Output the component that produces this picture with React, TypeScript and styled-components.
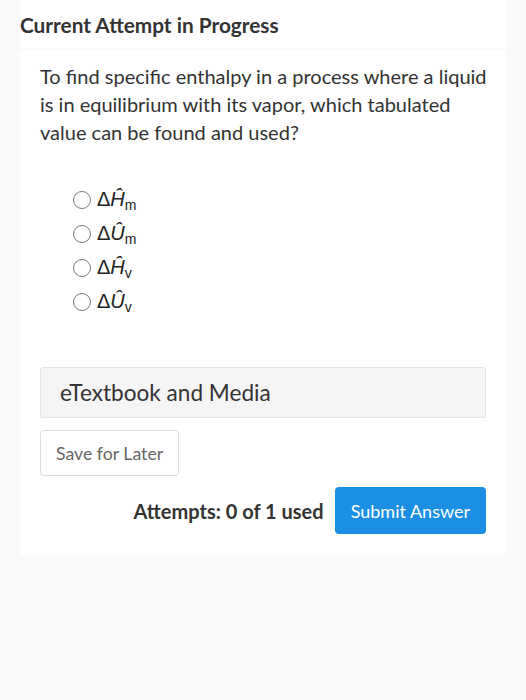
import { createGlobalStyle, styled } from "styled-components";

const GlobalStyle = createGlobalStyle`
  html, body {
    margin: 0;
    padding: 0;
    background: #fafafa;
  }
  body {
    font-family: Lato, "Open Sans", sans-serif;
    color: #333;
  }
`;

type Option = { symbol: string; sub: string };

const options: Option[] = [
  { symbol: "Ĥ", sub: "m" },
  { symbol: "Û", sub: "m" },
  { symbol: "Ĥ", sub: "v" },
  { symbol: "Û", sub: "v" },
];

const App: React.FunctionComponent = () => {
  return (
    <Page>
      <GlobalStyle />
      <HeaderCard>Current Attempt in Progress</HeaderCard>
      <BodyCard>
        <Question>
          To find specific enthalpy in a process where a liquid is in
          equilibrium with its vapor, which tabulated value can be found and
          used?
        </Question>
        <OptionList>
          {options.map((o, i) => (
            <OptionRow key={i}>
              <Radio type="radio" name="answer" />
              <MathText>
                Δ<i>{o.symbol}</i>
                <Sub>{o.sub}</Sub>
              </MathText>
            </OptionRow>
          ))}
        </OptionList>
        <MediaPanel>eTextbook and Media</MediaPanel>
        <SaveButton>Save for Later</SaveButton>
        <SubmitRow>
          <Attempts>Attempts: 0 of 1 used</Attempts>
          <SubmitButton>Submit Answer</SubmitButton>
        </SubmitRow>
      </BodyCard>
    </Page>
  );
};
export default App;

const Page = styled.main`
  display: flex;
  flex-direction: column;
  gap: 2px;
  padding: 0 20px;
`;
const HeaderCard = styled.header`
  display: flex;
  align-items: center;
  height: 48px;
  background: #fff;
  font-size: 20.8px;
  font-weight: 700;
  color: #333;
`;
const BodyCard = styled.section`
  display: flex;
  flex-direction: column;
  background: #fff;
  padding: 12px 20px 21px;
`;
const Question = styled.p`
  margin: 0 -6px 0 0;
  font-size: 20px;
  line-height: 28px;
  color: #333;
`;
const OptionList = styled.div`
  display: flex;
  flex-direction: column;
  gap: 10px;
  margin: 42px 0 0 33px;
`;
const OptionRow = styled.label`
  display: flex;
  align-items: center;
  gap: 6px;
  height: 24px;
`;
const Radio = styled.input`
  appearance: none;
  width: 18px;
  height: 18px;
  margin: 0;
  border: 1.5px solid #7a7a7a;
  border-radius: 50%;
  background: #fff;
`;
const MathText = styled.span`
  font-family: "Liberation Sans", Arial, sans-serif;
  font-size: 20px;
  color: #222;
`;
const Sub = styled.sub`
  font-size: 14px;
  vertical-align: -4px;
`;
const MediaPanel = styled.div`
  display: flex;
  align-items: center;
  height: 49px;
  margin-top: 53px;
  padding: 0 19px;
  background: #f5f5f5;
  border: 1px solid #e4e4e4;
  border-radius: 3px;
  font-size: 22.6px;
  color: #333;
`;
const SaveButton = styled.button`
  align-self: flex-start;
  height: 46px;
  margin-top: 12px;
  padding: 0 15px;
  background: #fff;
  border: 1px solid #dcdcdc;
  border-radius: 4px;
  font-family: Lato, sans-serif;
  font-size: 17.7px;
  color: #666;
`;
const SubmitRow = styled.div`
  display: flex;
  justify-content: flex-end;
  align-items: center;
  gap: 11px;
  margin-top: 11px;
`;
const Attempts = styled.span`
  font-size: 20px;
  font-weight: 700;
  color: #333;
`;
const SubmitButton = styled.button`
  height: 47px;
  padding: 0 16px;
  background: #1a8fe3;
  border: none;
  border-radius: 4px;
  font-family: Lato, sans-serif;
  font-size: 18px;
  color: #fff;
`;
